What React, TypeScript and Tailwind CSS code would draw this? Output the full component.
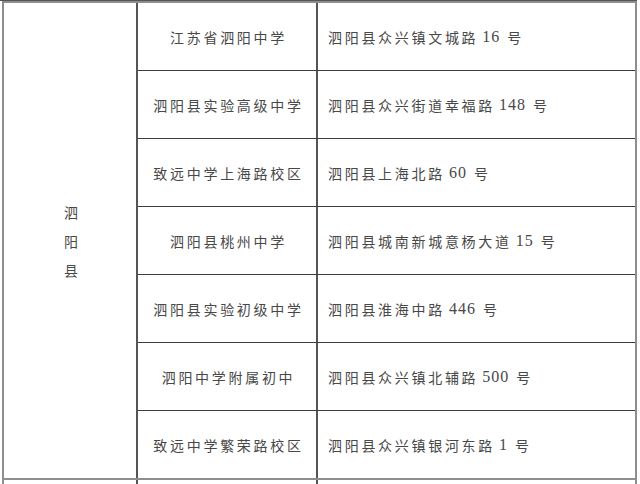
import React from "react";

const rows: { school: string; pre: string; num: string }[] = [
  { school: "江苏省泗阳中学", pre: "泗阳县众兴镇文城路", num: "16" },
  { school: "泗阳县实验高级中学", pre: "泗阳县众兴街道幸福路", num: "148" },
  { school: "致远中学上海路校区", pre: "泗阳县上海北路", num: "60" },
  { school: "泗阳县桃州中学", pre: "泗阳县城南新城意杨大道", num: "15" },
  { school: "泗阳县实验初级中学", pre: "泗阳县淮海中路", num: "446" },
  { school: "泗阳中学附属初中", pre: "泗阳县众兴镇北辅路", num: "500" },
  { school: "致远中学繁荣路校区", pre: "泗阳县众兴镇银河东路", num: "1" },
];

const cjk = { fontFamily: '"Noto Sans CJK SC", "Noto Sans", sans-serif' };
const serif = { fontFamily: '"Liberation Serif", serif' };

export default function App() {
  return (
    <div className="w-[640px] h-[484px] bg-white overflow-hidden text-[#484848]" style={cjk}>
      <div className="h-px w-[637px] bg-[#555]" />
      <div className="ml-[2px] w-[635px] flex border-t-2 border-l-2 border-r-2 border-b-2 border-[#8e8e8e]">
        <div className="w-[134px] h-[475px] shrink-0 border-r-2 border-[#555] flex flex-col items-center justify-center text-[14px] leading-[29px] pt-px pl-[2px]">
          <span>泗</span>
          <span>阳</span>
          <span>县</span>
        </div>
        <div className="flex-1 flex flex-col">
          {rows.map((r, i) => (
            <div
              key={i}
              className={
                i < rows.length - 1
                  ? "flex h-[68px] border-b border-[#3c3c3c]"
                  : "flex h-[67px]"
              }
            >
              <div className="w-[180px] shrink-0 border-r-2 border-[#555] flex items-center justify-center text-[14px] tracking-[2.7px] pl-[3px] pt-px">
                {r.school}
              </div>
              <div className="flex-1 flex items-center pl-[10px] text-[14px] tracking-[2.7px] whitespace-nowrap pt-px">
                <span>{r.pre}</span>
                <span className="text-[16px] tracking-[1px] pl-[4px] pr-[7px]" style={serif}>
                  {r.num}
                </span>
                <span>号</span>
              </div>
            </div>
          ))}
        </div>
      </div>
      <div className="ml-[2px] w-[635px] h-[4px] flex border-l-2 border-r-2 border-[#8e8e8e]">
        <div className="w-[134px] shrink-0 border-r-2 border-[#555]" />
        <div className="w-[180px] shrink-0 border-r-2 border-[#555]" />
        <div className="flex-1" />
      </div>
    </div>
  );
}
